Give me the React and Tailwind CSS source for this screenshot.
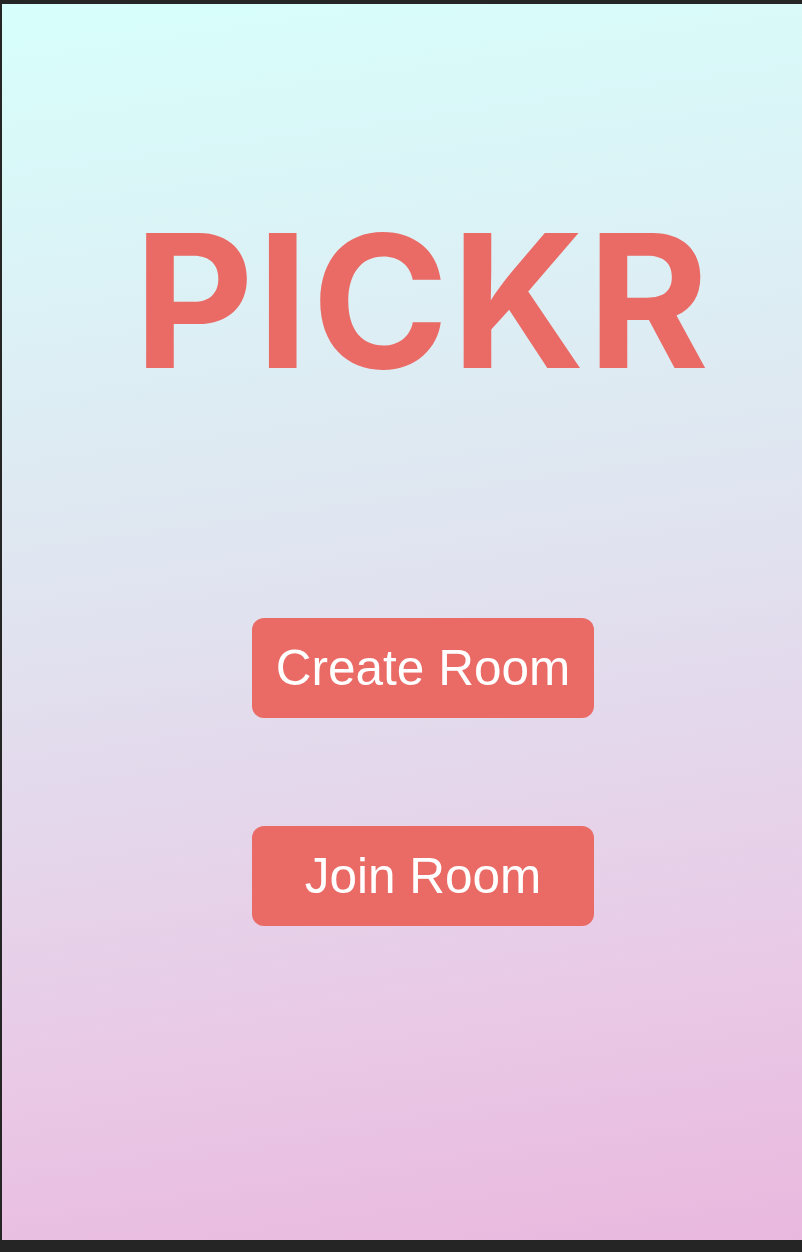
export default function App() {
  return (
    <div className="w-[802px] h-[1252px] bg-[#252525] pt-[4px] pl-[2px] pb-[12px]">
      <div className="h-full w-full flex flex-col items-center pl-[42px] bg-[linear-gradient(172deg,#d7fffb_0%,#e0e4f0_45%,#e9c9e6_80%,#e9b8de_100%)]">
        <h1
          className="mt-[205px] text-[185px] leading-none font-bold text-[#ea6b66] tracking-[3px]"
          style={{ fontFamily: 'Inter, "Liberation Sans", sans-serif' }}
        >
          PICKR
        </h1>
        <div className="mt-[224px] flex flex-col gap-[108px]">
          <button
            className="w-[342px] h-[100px] rounded-[12px] bg-[#ea6b66] text-white text-[49.5px]"
            style={{ fontFamily: '"Liberation Sans", Arial, sans-serif' }}
          >
            Create Room
          </button>
          <button
            className="w-[342px] h-[100px] rounded-[12px] bg-[#ea6b66] text-white text-[49.5px]"
            style={{ fontFamily: '"Liberation Sans", Arial, sans-serif' }}
          >
            Join Room
          </button>
        </div>
      </div>
    </div>
  )
}
